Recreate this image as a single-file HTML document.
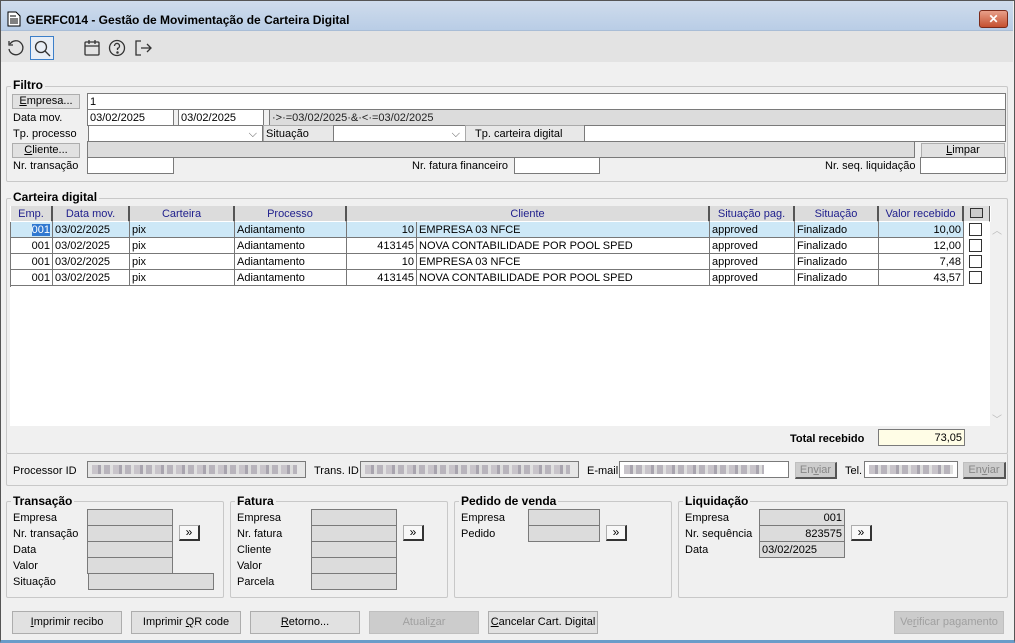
<!DOCTYPE html>
<html><head><meta charset="utf-8"><style>
*{box-sizing:border-box;margin:0;padding:0}
body{width:1015px;height:643px;overflow:hidden;background:#fff;font-family:"Liberation Sans",sans-serif;font-size:11px;color:#000;position:relative}
.a{position:absolute}
.win{left:0;top:0;width:1015px;height:643px;background:#f0f0f0;border:1px solid #555;border-bottom:3px solid #6a9cc9}
.title{left:1px;top:1px;width:1012px;height:30px;background:linear-gradient(#cfdcec,#b9cde6);border-bottom:1px solid #a9bdd6}
.tb{left:1px;top:31px;width:1012px;height:31px;background:#e3e3e3}
.t{position:absolute;white-space:nowrap;line-height:14px;margin-top:1px}
.in{position:absolute;background:#fff;border:1px solid #7a7a7a;height:17px;line-height:16px;padding-left:2px;white-space:nowrap;overflow:hidden}
.g{background:#dcdcdc}
.btn{position:absolute;background:#e1e1e1;border:1px solid #adadad;text-align:center;line-height:13px;white-space:nowrap}
.btn2{position:absolute;background:#e1e1e1;border:1px solid #adadad;text-align:center;line-height:21px;height:23px;width:110px}
.dis{color:#a0a0a0;background:#cccccc;border-color:#bfbfbf}
.grp{position:absolute;border:1px solid #c8c8c8;border-radius:2px}
.gl{position:absolute;background:#f0f0f0;font-weight:bold;font-size:12px;padding:0 2px;line-height:14px}
.tbl{position:absolute;left:10px;top:206px;width:981px;height:220px;background:#fff}
.hd{position:absolute;top:0;height:16px;background:#dcdcdc;border-right:2px solid #555;border-bottom:1px solid #fff;color:#1e1e8c;text-align:center;line-height:16px}
.c{position:absolute;height:16px;border-right:1px solid #777;border-bottom:1px solid #777;line-height:16px;padding:0 2px;white-space:nowrap;overflow:hidden}
.r{text-align:right}
.blur{background:repeating-linear-gradient(90deg,#c8c4ca 0 6px,#a8a4ae 6px 9px,#dcdcdc 9px 12px,#b8b4bc 12px 18px,#e0e0e0 18px 21px)}
.ff{position:absolute;height:17px;background:#dcdcdc;border:1px solid #7a7a7a}
.arr{position:absolute;background:#f8f8f8;border:1px solid #adadad;border-right:2px solid #333;border-bottom:2px solid #333;width:21px;height:16px;text-align:center;line-height:12px;font-size:12px}
</style></head><body>
<div class="a win"></div>
<div class="a title"></div>
<svg class="a" style="left:7px;top:11px" width="14" height="16" viewBox="0 0 14 16"><path d="M1 1h8l4 4v10H1z" fill="#fff" stroke="#000"/><path d="M3 5h6M3 8h8M3 10h8M3 12h8" stroke="#000"/></svg>
<div class="t" style="left:26px;top:12px;font-weight:bold;font-size:12px">GERFC014 - Gestão de Movimentação de Carteira Digital</div>
<div class="a" style="left:979px;top:10px;width:29px;height:18px;background:linear-gradient(#e8a08a,#c4502f);border:1px solid #7a2a1a;border-radius:3px;color:#fff;font-weight:bold;text-align:center;line-height:16px;font-size:12px">✕</div>
<div class="a tb"></div>
<svg class="a" style="left:7px;top:39px" width="18" height="18" viewBox="0 0 18 18" fill="none" stroke="#333" stroke-width="1.3"><path d="M3 5A7 7 0 1 1 2 10"/><path d="M2 2v4h4"/></svg>
<div class="a" style="left:30px;top:36px;width:24px;height:24px;border:1px solid #3c7fc9;background:#e8eef6"></div>
<svg class="a" style="left:34px;top:40px" width="17" height="17" viewBox="0 0 17 17" fill="none" stroke="#333" stroke-width="1.3"><circle cx="7" cy="7" r="5.5"/><path d="M11 11l5 5"/></svg>
<svg class="a" style="left:83px;top:39px" width="18" height="18" viewBox="0 0 18 18" fill="none" stroke="#333" stroke-width="1.3"><rect x="2" y="3" width="14" height="13" rx="1"/><path d="M2 7h14M6 1v4M12 1v4"/></svg>
<svg class="a" style="left:108px;top:39px" width="18" height="18" viewBox="0 0 18 18" fill="none" stroke="#333" stroke-width="1.3"><circle cx="9" cy="9" r="7.5"/><path d="M6.5 7a2.5 2.5 0 1 1 3 2.4V11"/><circle cx="9.5" cy="13.5" r=".6" fill="#333"/></svg>
<svg class="a" style="left:134px;top:39px" width="18" height="18" viewBox="0 0 18 18" fill="none" stroke="#333" stroke-width="1.3"><path d="M7 2H2v14h5M7 9h10M13 5l4 4-4 4"/></svg>

<div class="grp" style="left:6px;top:86px;width:1002px;height:96px"></div>
<div class="gl" style="left:11px;top:78px">Filtro</div>
<div class="btn" style="left:12px;top:94px;width:68px;height:15px"><u>E</u>mpresa...</div>
<div class="in" style="left:87px;top:93px;width:919px">1</div>
<div class="t" style="left:13px;top:110px">Data mov.</div>
<div class="in" style="left:87px;top:109px;width:87px">03/02/2025</div>
<div class="in" style="left:178px;top:109px;width:86px">03/02/2025</div>
<div class="in g" style="left:269px;top:109px;width:737px;color:#222">·&gt;·=03/02/2025·&amp;·&lt;·=03/02/2025</div>
<div class="t" style="left:13px;top:126px">Tp. processo</div>
<div class="in" style="left:88px;top:125px;width:175px"><span style="position:absolute;right:5px;top:0;color:#555">⌵</span></div>
<div class="in g" style="left:263px;top:125px;width:71px;background:#e8e8e8;border-color:#aaa">Situação</div>
<div class="in" style="left:333px;top:125px;width:133px"><span style="position:absolute;right:5px;top:0;color:#555">⌵</span></div>
<div class="in" style="left:465px;top:125px;width:120px;background:#e8e8e8;border-color:#aaa;padding-left:9px">Tp. carteira digital</div>
<div class="in" style="left:584px;top:125px;width:422px"></div>
<div class="btn" style="left:12px;top:143px;width:68px;height:15px"><u>C</u>liente...</div>
<div class="in g" style="left:87px;top:141px;width:828px"></div>
<div class="btn" style="left:921px;top:143px;width:84px;height:15px"><u>L</u>impar</div>
<div class="t" style="left:13px;top:158px">Nr. transação</div>
<div class="in" style="left:87px;top:157px;width:87px"></div>
<div class="t" style="left:412px;top:158px">Nr. fatura financeiro</div>
<div class="in" style="left:514px;top:157px;width:86px"></div>
<div class="t" style="left:825px;top:158px">Nr. seq. liquidação</div>
<div class="in" style="left:920px;top:157px;width:86px"></div>

<div class="grp" style="left:6px;top:198px;width:1002px;height:256px"></div>
<div class="gl" style="left:11px;top:190px">Carteira digital</div>
<div class="tbl">
<div class="hd" style="left:1px;width:42px">Emp.</div>
<div class="hd" style="left:43px;width:77px">Data mov.</div>
<div class="hd" style="left:120px;width:105px">Carteira</div>
<div class="hd" style="left:225px;width:112px">Processo</div>
<div class="hd" style="left:337px;width:363px">Cliente</div>
<div class="hd" style="left:700px;width:85px">Situação pag.</div>
<div class="hd" style="left:785px;width:84px">Situação</div>
<div class="hd" style="left:869px;width:85px">Valor recebido</div>
<div class="hd" style="left:954px;width:26px;border-right:1px solid #555"><div style="position:absolute;left:6px;top:2px;width:13px;height:10px;border:1px solid #333;background:#ccc"></div></div>
</div>
<div class="a" style="left:990px;top:222px;width:14px;height:204px;background:#f0f0f0;color:#bbb;font-size:10px;text-align:center">︿<div style="position:absolute;bottom:0;width:14px">﹀</div></div>

<div class="a" style="left:10px;top:222px;width:954px;height:16px;background:#cde8f7"></div>
<div class="c r" style="left:10px;top:222px;width:43px"><span style="background:#3078d0;color:#fff">001</span></div>
<div class="c" style="left:53px;top:222px;width:77px">03/02/2025</div>
<div class="c" style="left:130px;top:222px;width:105px">pix</div>
<div class="c" style="left:235px;top:222px;width:112px">Adiantamento</div>
<div class="c r" style="left:347px;top:222px;width:70px">10</div>
<div class="c" style="left:417px;top:222px;width:293px">EMPRESA 03 NFCE</div>
<div class="c" style="left:710px;top:222px;width:85px">approved</div>
<div class="c" style="left:795px;top:222px;width:84px">Finalizado</div>
<div class="c r" style="left:879px;top:222px;width:85px">10,00</div>
<div class="a" style="left:969px;top:223px;width:13px;height:13px;border:1px solid #333;background:#fff"></div>

<div class="c r" style="left:10px;top:238px;width:43px">001</div>
<div class="c" style="left:53px;top:238px;width:77px">03/02/2025</div>
<div class="c" style="left:130px;top:238px;width:105px">pix</div>
<div class="c" style="left:235px;top:238px;width:112px">Adiantamento</div>
<div class="c r" style="left:347px;top:238px;width:70px">413145</div>
<div class="c" style="left:417px;top:238px;width:293px">NOVA CONTABILIDADE POR POOL SPED</div>
<div class="c" style="left:710px;top:238px;width:85px">approved</div>
<div class="c" style="left:795px;top:238px;width:84px">Finalizado</div>
<div class="c r" style="left:879px;top:238px;width:85px">12,00</div>
<div class="a" style="left:969px;top:239px;width:13px;height:13px;border:1px solid #333;background:#fff"></div>

<div class="c r" style="left:10px;top:254px;width:43px">001</div>
<div class="c" style="left:53px;top:254px;width:77px">03/02/2025</div>
<div class="c" style="left:130px;top:254px;width:105px">pix</div>
<div class="c" style="left:235px;top:254px;width:112px">Adiantamento</div>
<div class="c r" style="left:347px;top:254px;width:70px">10</div>
<div class="c" style="left:417px;top:254px;width:293px">EMPRESA 03 NFCE</div>
<div class="c" style="left:710px;top:254px;width:85px">approved</div>
<div class="c" style="left:795px;top:254px;width:84px">Finalizado</div>
<div class="c r" style="left:879px;top:254px;width:85px">7,48</div>
<div class="a" style="left:969px;top:255px;width:13px;height:13px;border:1px solid #333;background:#fff"></div>

<div class="c r" style="left:10px;top:270px;width:43px">001</div>
<div class="c" style="left:53px;top:270px;width:77px">03/02/2025</div>
<div class="c" style="left:130px;top:270px;width:105px">pix</div>
<div class="c" style="left:235px;top:270px;width:112px">Adiantamento</div>
<div class="c r" style="left:347px;top:270px;width:70px">413145</div>
<div class="c" style="left:417px;top:270px;width:293px">NOVA CONTABILIDADE POR POOL SPED</div>
<div class="c" style="left:710px;top:270px;width:85px">approved</div>
<div class="c" style="left:795px;top:270px;width:84px">Finalizado</div>
<div class="c r" style="left:879px;top:270px;width:85px">43,57</div>
<div class="a" style="left:969px;top:271px;width:13px;height:13px;border:1px solid #333;background:#fff"></div>
<div class="a" style="left:10px;top:222px;width:1px;height:65px;background:#777"></div>

<div class="t" style="left:790px;top:431px;font-weight:bold">Total recebido</div>
<div class="in r" style="left:878px;top:429px;width:87px;background:#fffde6;padding-right:2px">73,05</div>

<div class="grp" style="left:6px;top:453px;width:1002px;height:33px;border-top:none"></div>
<div class="t" style="left:13px;top:463px">Processor ID</div>
<div class="in" style="left:87px;top:461px;width:219px;background:#e6e6e6;padding:3px 4px"><div class="blur" style="height:9px;width:205px"></div></div>
<div class="t" style="left:314px;top:463px">Trans. ID</div>
<div class="in" style="left:360px;top:461px;width:219px;background:#e6e6e6;padding:3px 4px"><div class="blur" style="height:9px;width:205px"></div></div>
<div class="t" style="left:587px;top:463px">E-mail</div>
<div class="in" style="left:619px;top:461px;width:170px;padding:3px 4px"><div class="blur" style="height:9px;width:140px"></div></div>
<div class="btn dis" style="left:795px;top:462px;width:42px;height:17px;line-height:15px;color:#888;border-right:2px solid #555;border-bottom:2px solid #555">En<u>v</u>iar</div>
<div class="t" style="left:845px;top:463px">Tel.</div>
<div class="in" style="left:864px;top:461px;width:94px;padding:3px 4px"><div class="blur" style="height:9px;width:84px"></div></div>
<div class="btn dis" style="left:963px;top:462px;width:43px;height:17px;line-height:15px;color:#888;border-right:2px solid #555;border-bottom:2px solid #555">En<u>v</u>iar</div>

<div class="grp" style="left:6px;top:501px;width:218px;height:97px"></div>
<div class="gl" style="left:11px;top:494px">Transação</div>
<div class="t" style="left:13px;top:510px">Empresa</div>
<div class="t" style="left:13px;top:526px">Nr. transação</div>
<div class="t" style="left:13px;top:542px">Data</div>
<div class="t" style="left:13px;top:558px">Valor</div>
<div class="t" style="left:13px;top:574px">Situação</div>
<div class="ff" style="left:87px;top:509px;width:86px"></div>
<div class="ff" style="left:87px;top:525px;width:86px"></div>
<div class="ff" style="left:87px;top:541px;width:86px"></div>
<div class="ff" style="left:87px;top:557px;width:86px"></div>
<div class="ff" style="left:88px;top:573px;width:126px"></div>
<div class="arr" style="left:179px;top:525px">»</div>

<div class="grp" style="left:230px;top:501px;width:218px;height:97px"></div>
<div class="gl" style="left:235px;top:494px">Fatura</div>
<div class="t" style="left:237px;top:510px">Empresa</div>
<div class="t" style="left:237px;top:526px">Nr. fatura</div>
<div class="t" style="left:237px;top:542px">Cliente</div>
<div class="t" style="left:237px;top:558px">Valor</div>
<div class="t" style="left:237px;top:574px">Parcela</div>
<div class="ff" style="left:311px;top:509px;width:86px"></div>
<div class="ff" style="left:311px;top:525px;width:86px"></div>
<div class="ff" style="left:311px;top:541px;width:86px"></div>
<div class="ff" style="left:311px;top:557px;width:86px"></div>
<div class="ff" style="left:311px;top:573px;width:86px"></div>
<div class="arr" style="left:403px;top:525px">»</div>

<div class="grp" style="left:454px;top:501px;width:218px;height:97px"></div>
<div class="gl" style="left:459px;top:494px">Pedido de venda</div>
<div class="t" style="left:461px;top:510px">Empresa</div>
<div class="t" style="left:461px;top:526px">Pedido</div>
<div class="ff" style="left:528px;top:509px;width:72px"></div>
<div class="ff" style="left:528px;top:525px;width:72px"></div>
<div class="arr" style="left:606px;top:525px">»</div>

<div class="grp" style="left:678px;top:501px;width:330px;height:97px"></div>
<div class="gl" style="left:683px;top:494px">Liquidação</div>
<div class="t" style="left:685px;top:510px">Empresa</div>
<div class="t" style="left:685px;top:526px">Nr. sequência</div>
<div class="t" style="left:685px;top:542px">Data</div>
<div class="ff r" style="left:759px;top:509px;width:86px;line-height:16px;padding-right:2px">001</div>
<div class="ff r" style="left:759px;top:525px;width:86px;line-height:16px;padding-right:2px">823575</div>
<div class="ff" style="left:759px;top:541px;width:86px;line-height:16px;padding-left:2px">03/02/2025</div>
<div class="arr" style="left:851px;top:525px">»</div>

<div class="btn2" style="left:12px;top:611px"><u>I</u>mprimir recibo</div>
<div class="btn2" style="left:131px;top:611px">Imprimir <u>Q</u>R code</div>
<div class="btn2" style="left:250px;top:611px"><u>R</u>etorno...</div>
<div class="btn2 dis" style="left:369px;top:611px">Atuali<u>z</u>ar</div>
<div class="btn2" style="left:488px;top:611px"><u>C</u>ancelar Cart. Digital</div>
<div class="btn2 dis" style="left:894px;top:611px">Ve<u>r</u>ificar pagamento</div>
</body></html>
